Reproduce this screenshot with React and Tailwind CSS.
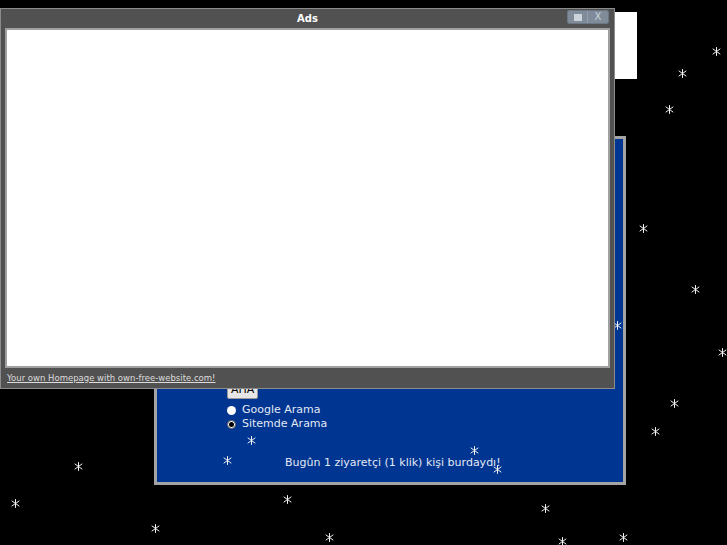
import React from "react";

const flakes = [
  [716, 51], [682, 73], [669, 109], [643, 228], [695, 289], [722, 352],
  [617, 325], [674, 403], [655, 431], [251, 440], [474, 450], [227, 460],
  [497, 469], [78, 466], [15, 503], [287, 499], [545, 508], [155, 528],
  [329, 537], [562, 541], [623, 537],
];

const Flake = ({ x, y }) => (
  <svg
    className="absolute"
    style={{ left: x - 4, top: y - 4 }}
    width="9"
    height="9"
    viewBox="0 0 9 9"
  >
    <g stroke="#f2f2f2" strokeWidth="1" strokeLinecap="round">
      <line x1="4.5" y1="0.5" x2="4.5" y2="8.5" />
      <line x1="1" y1="2" x2="8" y2="7" />
      <line x1="1" y1="7" x2="8" y2="2" />
    </g>
  </svg>
);

const App = () => {
  return (
    <div className="relative w-[727px] h-[545px] bg-black overflow-hidden font-['DejaVu_Sans',sans-serif]">
      {/* white block behind window */}
      <div className="absolute left-[614px] top-[12px] w-[23px] h-[67px] bg-white" />

      {/* blue page panel */}
      <div className="absolute left-[154px] top-[136px] w-[472px] h-[349px] border-[3px] border-[#a4a4a4] bg-[#003591]">
        <div className="pl-[70px] pt-[241px] flex flex-col text-[11px] text-[#e4e8f4]">
          <button className="self-start h-[19px] px-[3px] bg-[#e6e6e6] border border-[#9a9a9a] rounded-[2px] text-[11px] text-black leading-none">
            AHA
          </button>
          <label className="flex items-center gap-[6px] mt-[4px] h-[14px]">
            <span className="w-[9px] h-[9px] rounded-full bg-white" />
            Google Arama
          </label>
          <label className="flex items-center gap-[6px] h-[14px]">
            <span className="w-[9px] h-[9px] rounded-full bg-white border border-[#555] flex items-center justify-center">
              <span className="w-[5px] h-[5px] rounded-full bg-black" />
            </span>
            Sitemde Arama
          </label>
          <p className="mt-[24px] ml-[58px] text-[11px]">Bugûn 1 ziyaretçi (1 klik) kişi burdaydı!</p>
        </div>
      </div>

      {flakes.map(([x, y], i) => (
        <Flake key={i} x={x} y={y} />
      ))}

      {/* Ads window */}
      <div className="absolute left-0 top-[8px] w-[615px] h-[381px] bg-[#515151] border border-[#8c8c8c] flex flex-col">
        <div className="relative h-[19px] flex items-center justify-center">
          <span className="text-[10px] font-bold text-white">Ads</span>
          <div className="absolute right-[5px] top-[1px] flex h-[14px] rounded-[2px] overflow-hidden border border-[#6c7785]">
            <div className="w-[20px] bg-[#7f8b99] flex items-center justify-center border-r border-[#95a0ad]">
              <span className="w-[8px] h-[7px] bg-[#cdd3db]" />
            </div>
            <div className="w-[20px] bg-[#7f8b99] flex items-center justify-center text-[10px] text-[#cdd3db] leading-none">
              X
            </div>
          </div>
        </div>
        <div className="ml-[4px] mr-[4px] h-[340px] bg-white border-2 border-[#a0a0a0]" />
        <div className="flex-1 flex items-center pl-[6px]">
          <a className="text-[8.5px] text-[#dcdcdc] underline">Your own Homepage with own-free-website.com!</a>
        </div>
      </div>
    </div>
  );
};

export default App;
